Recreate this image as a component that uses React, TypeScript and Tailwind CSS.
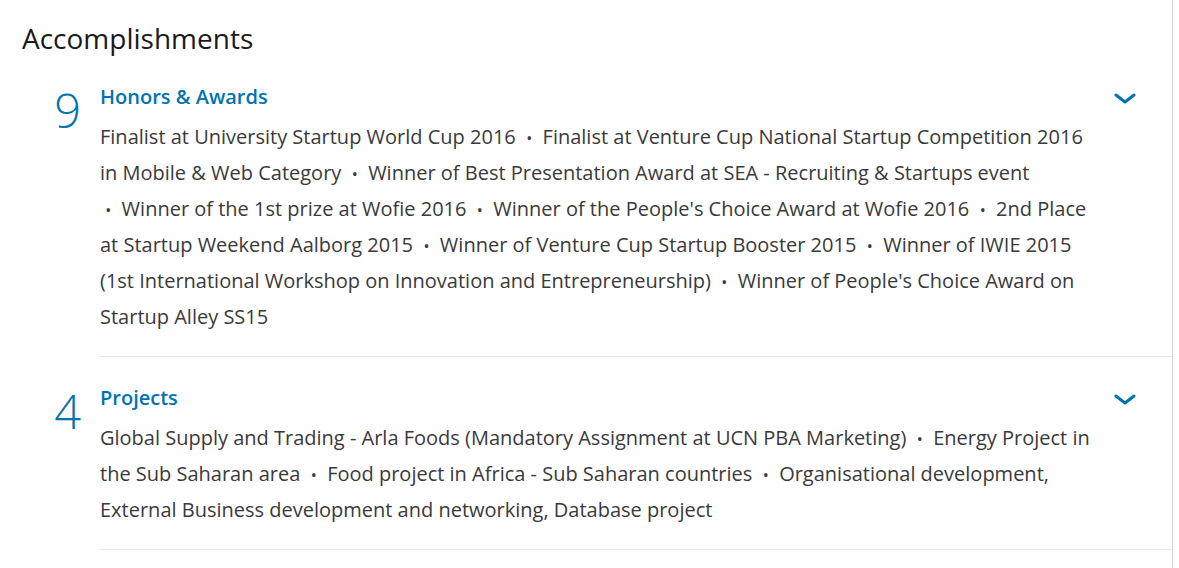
const honors = [
  "Finalist at University Startup World Cup 2016",
  "Finalist at Venture Cup National Startup Competition 2016 in Mobile & Web Category",
  "Winner of Best Presentation Award at SEA - Recruiting & Startups event",
  "Winner of the 1st prize at Wofie 2016",
  "Winner of the People's Choice Award at Wofie 2016",
  "2nd Place at Startup Weekend Aalborg 2015",
  "Winner of Venture Cup Startup Booster 2015",
  "Winner of IWIE 2015 (1st International Workshop on Innovation and Entrepreneurship)",
  "Winner of People's Choice Award on Startup Alley SS15",
];

const projects = [
  "Global Supply and Trading - Arla Foods (Mandatory Assignment at UCN PBA Marketing)",
  "Energy Project in the Sub Saharan area",
  "Food project in Africa - Sub Saharan countries",
  "Organisational development, External Business development and networking, Database project",
];

function Chevron() {
  return (
    <svg width="22" height="12" viewBox="0 0 22 12" className="text-[#0073b1]">
      <polyline
        points="2,2 11,9 20,2"
        fill="none"
        stroke="currentColor"
        strokeWidth="3"
        strokeLinecap="round"
        strokeLinejoin="round"
      />
    </svg>
  );
}

function Section({ count, title, items }: { count: number; title: string; items: string[] }) {
  return (
    <section className="flex">
      <div className="w-[100px] shrink-0 pr-[19px] pt-[31px] text-right text-[47px] font-light leading-none text-[#0073b1]">
        {count}
      </div>
      <div className="flex-1 border-b border-[#e6e9ec] pt-[27px] pb-[21px]">
        <div className="flex items-center justify-between pr-[36px]">
          <h3 className="text-[20px] font-semibold leading-[28px] text-[#0073b1]">{title}</h3>
          <button className="flex h-[28px] translate-y-[2px] items-center">
            <Chevron />
          </button>
        </div>
        <p className="mt-[8px] max-w-[1000px] text-[20px] leading-[36px] text-[#3a3a3a]">
          {items.map((item, i) => (
            <span key={i}>
              {i > 0 && (
                <>
                  {" \u00a0"}
                  <span className="text-[16px] leading-none">•</span>
                  {"\u00a0\u00a0"}
                </>
              )}
              {item}
            </span>
          ))}
        </p>
      </div>
    </section>
  );
}

export default function App() {
  return (
    <div className="min-h-screen bg-white font-['Segoe_UI','Open_Sans',sans-serif]">
      <div className="w-[1173px] min-h-screen border-r border-[#d6d6d6]">
        <h2 className="pl-[22px] pt-[21px] text-[28px] font-normal leading-[35px] text-[#1a1a1a]">
          Accomplishments
        </h2>
        <Section count={9} title="Honors & Awards" items={honors} />
        <Section count={4} title="Projects" items={projects} />
      </div>
    </div>
  );
}
